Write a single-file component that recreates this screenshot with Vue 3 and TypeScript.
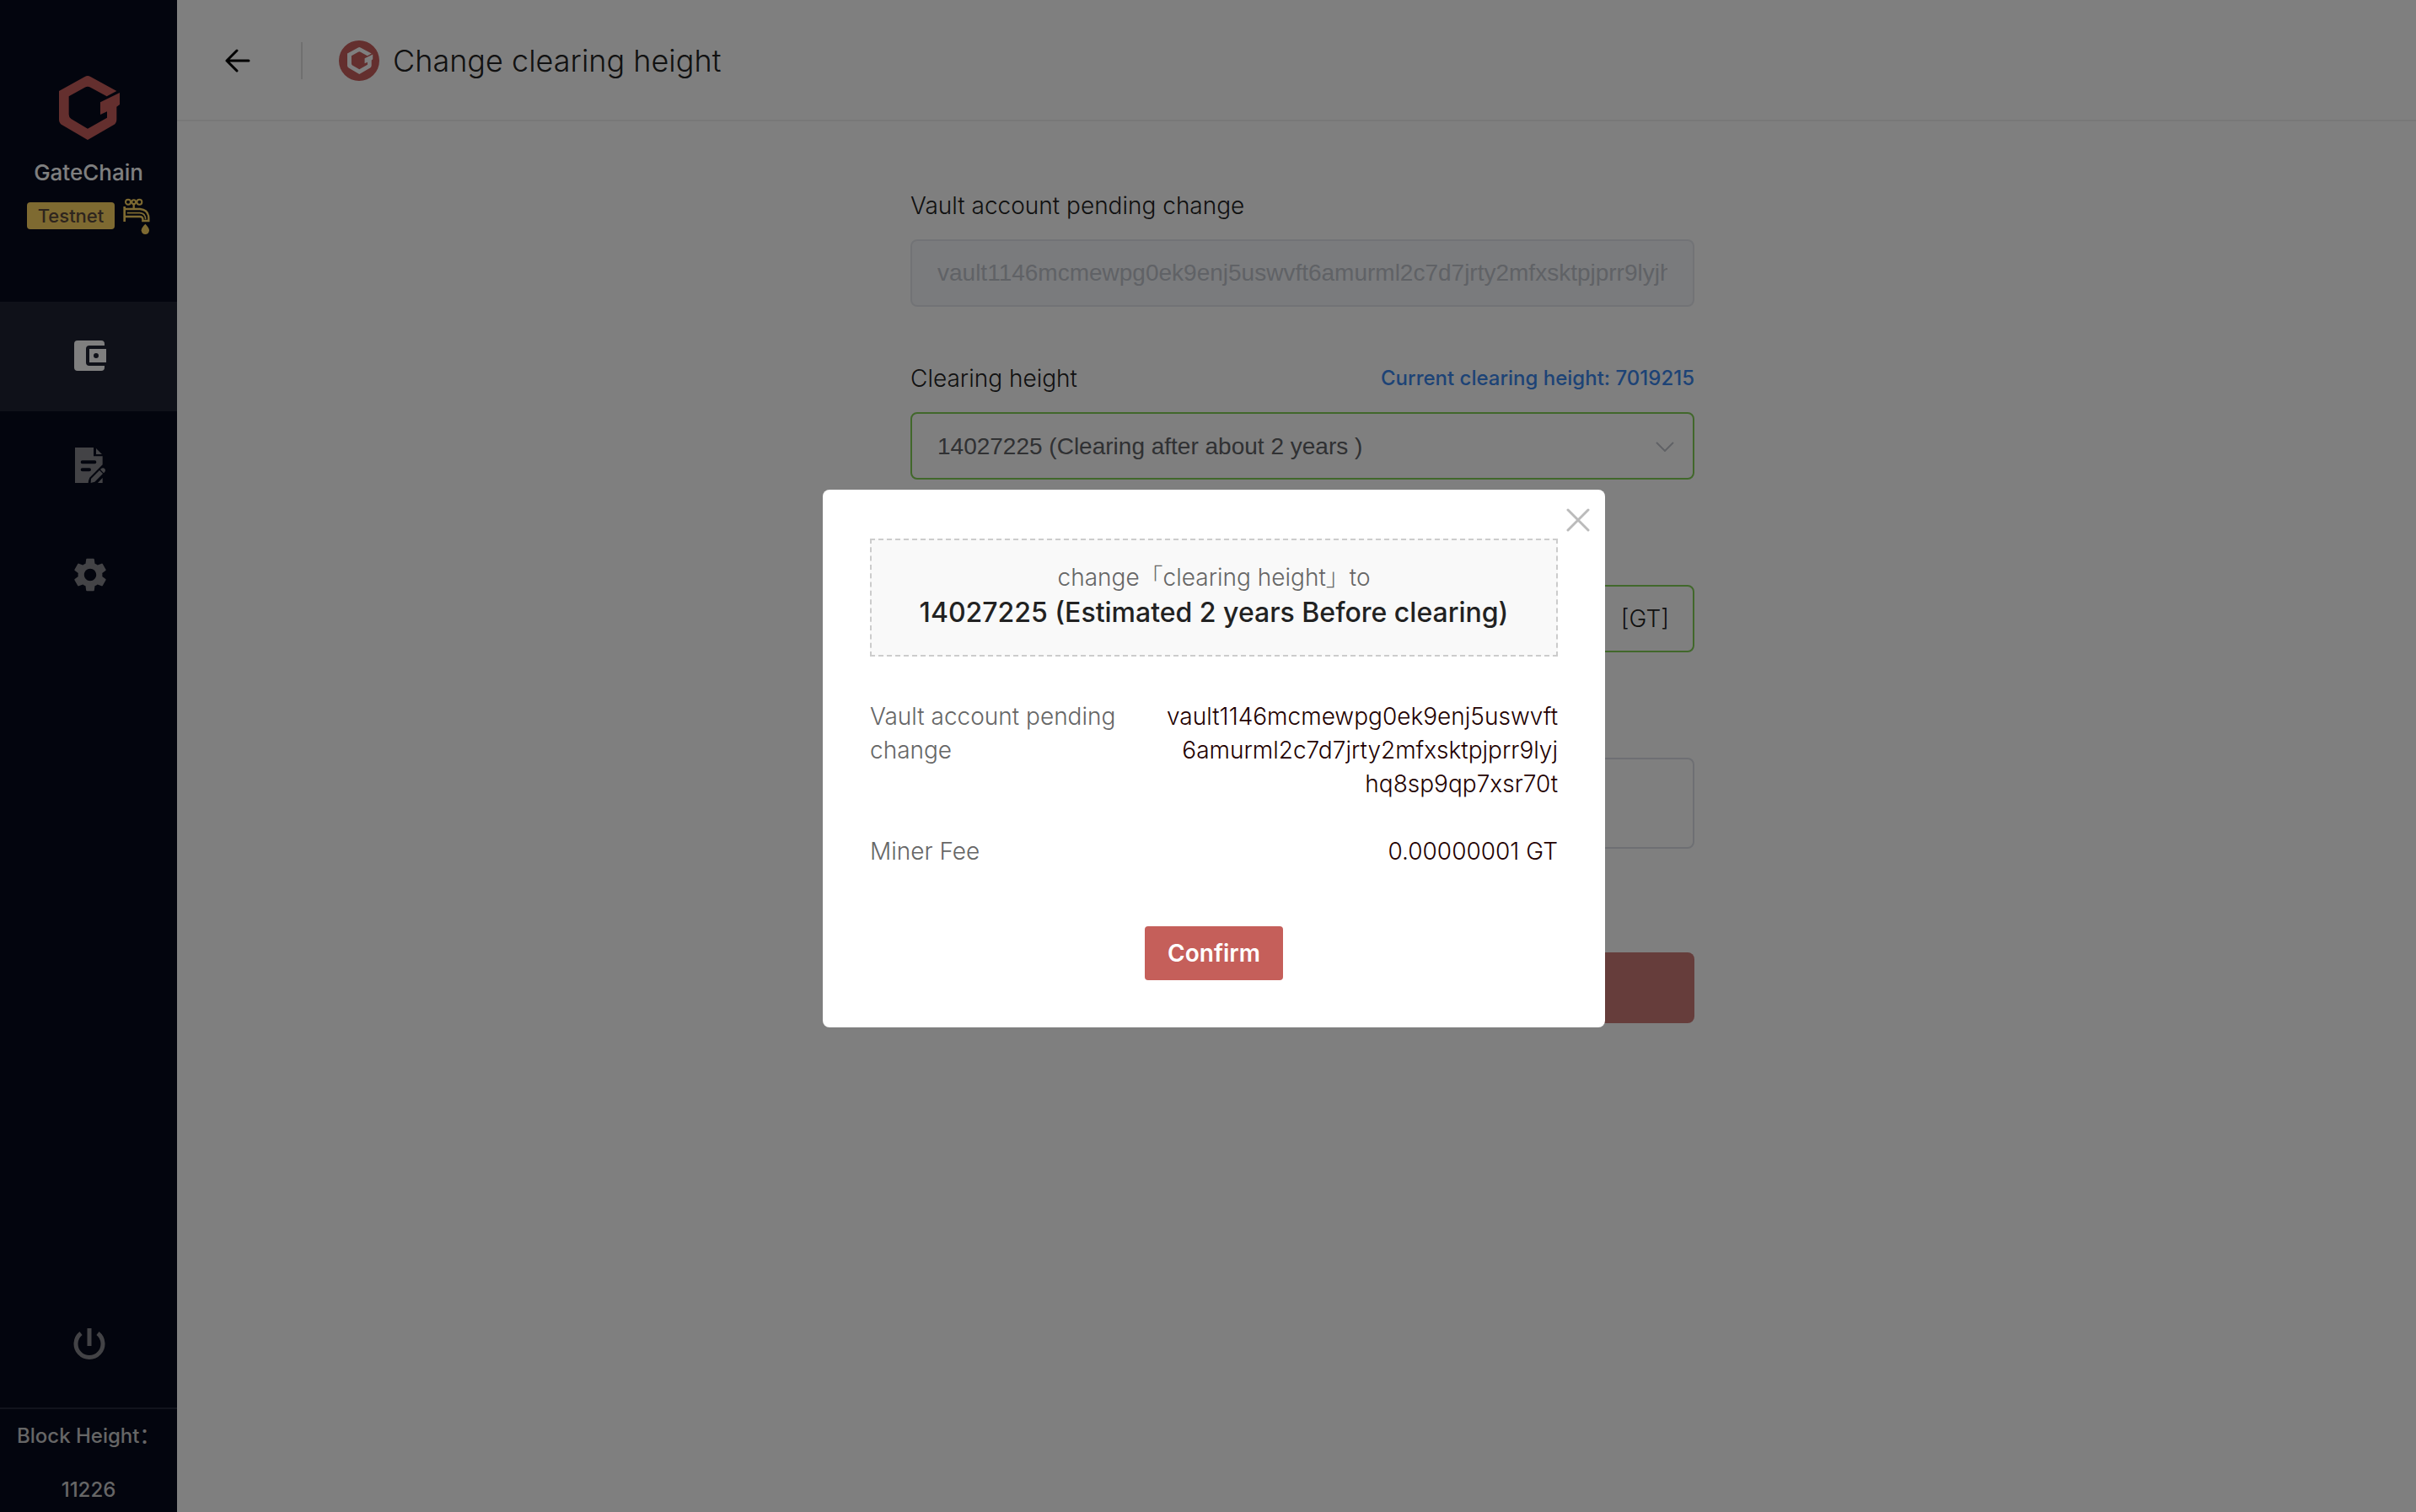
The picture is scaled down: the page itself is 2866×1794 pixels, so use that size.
<script setup lang="ts">
import { ref } from 'vue'

interface HeightOption {
  value: string
  label: string
}

const account = 'vault1146mcmewpg0ek9enj5uswvft6amurml2c7d7jrty2mfxsktpjprr9lyjhq8sp9qp7xsr70t'
const accountLines: string[] = [account.slice(0, 30), account.slice(30, 62), account.slice(62)]

const heights: HeightOption[] = [
  { value: '14027225', label: '14027225 (Clearing after about 2 years )' },
]
const selectedHeight = ref<string>('14027225')
const fee = ref<string>('')
const note = ref<string>('')
const dialogOpen = ref<boolean>(true)
</script>

<template>
  <div class="app">
    <aside class="sidebar">
      <svg class="brand-logo" viewBox="0 0 216 228" aria-hidden="true">
        <path d="M92 3Q102-3 112 3L205 54L170 73L112 41Q102 35 92 41L35 73V137Q35 147 43 153L102 188L171 149V127L147 138V94L216 60V102L205 110V155Q205 168 194 175L102 228L11 175Q0 168 0 155V54Z" />
      </svg>
      <div class="brand-name">GateChain</div>
      <div class="network">
        <span class="badge">Testnet</span>
        <svg class="faucet" viewBox="0 0 96 129" aria-hidden="true">
          <g fill="none" stroke="currentColor" stroke-width="6">
            <circle cx="18" cy="14" r="9" />
            <circle cx="38" cy="14" r="7" />
            <circle cx="58" cy="14" r="9" />
            <path d="M38 21V38" stroke-width="7" />
            <path d="M5 30V84" stroke-width="8" />
            <path d="M5 39H60Q90 42 91 70V81H70V74Q69 66 60 66H5" stroke-width="7" />
            <path d="M14 53H60Q80 55 80 76" stroke-width="5" />
          </g>
          <path d="M79 92Q93 106 93 115A14 14 0 0 1 65 115Q65 106 79 92Z" fill="currentColor" />
        </svg>
      </div>
      <nav class="nav">
        <a class="nav-item active" href="#wallet" aria-label="Wallet">
          <svg width="38" height="36" viewBox="0 0 114 108">
            <path d="M12 0H96Q108 0 108 12V18H54Q42 18 42 30V78Q42 90 54 90H108V96Q108 108 96 108H12Q0 108 0 96V12Q0 0 12 0Z" />
            <path fill-rule="evenodd" d="M54 30H114V78H54ZM78 45A9 9 0 1 0 78 63A9 9 0 1 0 78 45Z" />
          </svg>
        </a>
        <a class="nav-item" href="#records" aria-label="Records">
          <svg width="36" height="42" viewBox="0 0 108 126">
            <path fill-rule="evenodd" d="M0 0H66V31H98V61L52 107Q48 115 47 126H0ZM26 46A6 6 0 0 0 26 58H70A6 6 0 0 0 70 46ZM26 73A6 6 0 0 0 26 85H51A6 6 0 0 0 51 73Z" />
            <path d="M75 3L96 24H75ZM57 111L87 81L99 93L70 122L56 126ZM90 78L94 74Q101 70 107 77Q110 84 103 90L102 91ZM98 108V126H81Z" />
          </svg>
        </a>
        <a class="nav-item" href="#settings" aria-label="Settings">
          <svg width="48" height="48" viewBox="0 0 24 24">
            <path d="M19.14 12.94c.04-.3.06-.61.06-.94 0-.32-.02-.64-.07-.94l2.03-1.58a.49.49 0 0 0 .12-.61l-1.92-3.32a.488.488 0 0 0-.59-.22l-2.39.96c-.5-.38-1.03-.7-1.62-.94l-.36-2.54a.484.484 0 0 0-.48-.41h-3.84c-.24 0-.43.17-.47.41l-.36 2.54c-.59.24-1.13.57-1.62.94l-2.39-.96c-.22-.08-.47 0-.59.22L2.74 8.87c-.12.21-.08.47.12.61l2.03 1.58c-.05.3-.09.63-.09.94s.02.64.07.94l-2.03 1.58a.49.49 0 0 0-.12.61l1.92 3.32c.12.22.37.29.59.22l2.39-.96c.5.38 1.03.7 1.62.94l.36 2.54c.05.24.24.41.48.41h3.84c.24 0 .44-.17.47-.41l.36-2.54c.59-.24 1.13-.56 1.62-.94l2.39.96c.22.08.47 0 .59-.22l1.92-3.32c.12-.22.07-.47-.12-.61l-2.01-1.58zM12 15.6c-1.98 0-3.6-1.62-3.6-3.6s1.62-3.6 3.6-3.6 3.6 1.62 3.6 3.6-1.62 3.6-3.6 3.6z" />
          </svg>
        </a>
      </nav>
      <button class="power" type="button" aria-label="Log out">
        <svg width="38" height="38" viewBox="0 0 38 38" fill="none" stroke="currentColor" stroke-width="5">
          <path d="M9 6A16 16 0 1 0 29 6" />
          <path d="M19 0V21" />
        </svg>
      </button>
      <div class="block-height">
        <div>Block Height：</div>
        <div class="block-number">11226</div>
      </div>
    </aside>

    <main class="main">
      <header class="topbar">
        <button class="back" type="button" aria-label="Back">
          <svg width="30" height="28" viewBox="0 0 30 28" fill="none" stroke="currentColor" stroke-width="3" stroke-linecap="round" stroke-linejoin="round">
            <path d="M14 2L2 14L14 26M2 14H28" />
          </svg>
        </button>
        <span class="divider"></span>
        <svg class="token" viewBox="0 0 48 48" aria-hidden="true">
          <circle cx="24" cy="24" r="24" fill="#c85e5c" />
          <path transform="translate(10 8) scale(.14)" fill="#fff" d="M92 3Q102-3 112 3L205 54L170 73L112 41Q102 35 92 41L35 73V137Q35 147 43 153L102 188L171 149V127L147 138V94L216 60V102L205 110V155Q205 168 194 175L102 228L11 175Q0 168 0 155V54Z" />
        </svg>
        <h1 class="title">Change clearing height</h1>
      </header>

      <form class="form" @submit.prevent="dialogOpen = true">
        <div class="field">
          <div class="label-row"><label for="account">Vault account pending change</label></div>
          <input id="account" class="box" type="text" :value="account" disabled />
        </div>
        <div class="field">
          <div class="label-row">
            <label for="height">Clearing height</label>
            <span class="current">Current clearing height: 7019215</span>
          </div>
          <div class="select-wrap">
            <select id="height" v-model="selectedHeight" class="box valid">
              <option v-for="h in heights" :key="h.value" :value="h.value">{{ h.label }}</option>
            </select>
            <svg class="chevron" width="22" height="12" viewBox="0 0 22 12" fill="none" stroke="#c0c4cc" stroke-width="2">
              <path d="M1 1L11 11L21 1" />
            </svg>
          </div>
        </div>
        <div class="field">
          <div class="label-row"></div>
          <div class="box valid fee">
            <input v-model="fee" class="fee-input" type="text" aria-label="Miner Fee" />
            <span>[GT]</span>
          </div>
        </div>
        <div class="field">
          <div class="label-row"></div>
          <textarea v-model="note" class="box area" aria-label="Note"></textarea>
        </div>
        <button class="submit" type="submit" aria-label="Submit"></button>
      </form>
    </main>

    <div v-if="dialogOpen" class="overlay">
      <section class="dialog" role="dialog" aria-modal="true" aria-label="Confirm change">
        <button class="close" type="button" aria-label="Close" @click="dialogOpen = false">
          <svg width="28" height="28" viewBox="0 0 28 28" fill="none" stroke="currentColor" stroke-width="3" stroke-linecap="round">
            <path d="M2 2L26 26M26 2L2 26" />
          </svg>
        </button>
        <div class="summary">
          <div class="summary-top">change「clearing height」to</div>
          <div class="summary-main">14027225 (Estimated 2 years Before clearing)</div>
        </div>
        <dl class="details">
          <div class="detail">
            <dt>Vault account pending change</dt>
            <dd><span v-for="line in accountLines" :key="line" class="line">{{ line }}</span></dd>
          </div>
          <div class="detail">
            <dt>Miner Fee</dt>
            <dd>0.00000001 GT</dd>
          </div>
        </dl>
        <button class="confirm" type="button" @click="dialogOpen = false">Confirm</button>
      </section>
    </div>
  </div>
</template>

<style>
body {
  margin: 0;
  background: #fff;
}
</style>

<style scoped>
.app {
  display: flex;
  min-height: 100vh;
  font-family: Inter, "Noto Sans CJK SC", sans-serif;
  font-size: 28px;
  font-weight: 300;
  color: #222;
}
.app *,
.app *::before {
  box-sizing: border-box;
}
button {
  padding: 0;
  border: 0;
  background: none;
  font-family: inherit;
  cursor: pointer;
}
svg {
  display: block;
}
.sidebar {
  display: flex;
  flex-direction: column;
  align-items: center;
  flex: 0 0 210px;
  padding-top: 90px;
  background: #060b1c;
  color: #fff;
}
.brand-logo {
  width: 72px;
  height: 76px;
  margin-left: 2px;
  fill: #c85e5c;
}
.brand-name {
  margin-top: 19px;
  font-size: 26px;
  font-weight: 500;
  line-height: 40px;
}
.network {
  display: flex;
  align-items: center;
  gap: 10px;
  height: 44px;
  margin-top: 9px;
  color: #fdd562;
}
.badge {
  width: 104px;
  border-radius: 4px;
  background: #fdd562;
  color: #5c4a3c;
  font-size: 22px;
  font-weight: 500;
  line-height: 32px;
  text-align: center;
}
.faucet {
  width: 32px;
  height: 43px;
}
.nav {
  align-self: stretch;
  margin-top: 80px;
}
.nav-item {
  display: flex;
  align-items: center;
  justify-content: center;
  height: 130px;
  padding: 0 0 2px 3px;
  fill: #87878c;
}
.nav-item.active {
  background: #1e2232;
  fill: #fff;
}
.power {
  margin: auto 0 56px 2px;
  color: #87878c;
}
.block-height {
  align-self: stretch;
  height: 124px;
  border-top: 2px solid #24293a;
  padding-left: 20px;
  font-size: 24px;
  font-weight: 500;
  line-height: 64px;
  color: #ccc;
  white-space: nowrap;
  overflow: hidden;
}
.block-number {
  margin-left: -20px;
  text-align: center;
}
.main {
  flex: 1;
  min-width: 0;
}
.topbar {
  display: flex;
  align-items: center;
  height: 144px;
  padding: 2px 0 0 57px;
  border-bottom: 2px solid #f0f0f0;
}
.back {
  color: #000;
}
.divider {
  width: 2px;
  height: 44px;
  margin: 0 43px 0 60px;
  background: #e0e0e0;
}
.token {
  width: 48px;
  height: 48px;
}
.title {
  margin: 0 0 0 16px;
  font-size: 36px;
  font-weight: 300;
}
.form {
  display: flex;
  flex-direction: column;
  gap: 61px;
  max-width: 930px;
  margin: 76px auto 0;
  position: relative;
  left: 7px;
}
.field {
  display: flex;
  flex-direction: column;
  gap: 16px;
}
.label-row {
  display: flex;
  justify-content: space-between;
  height: 48px;
  line-height: 48px;
}
.current {
  font-size: 24px;
  font-weight: 500;
  color: #3a86ec;
}
.box {
  width: 100%;
  height: 80px;
  margin: 0;
  padding: 0 30px;
  border: 2px solid #dcdfe6;
  border-radius: 8px;
  outline: 0;
  background: #fff;
  font-family: "Liberation Sans", Arial, sans-serif;
  font-size: 28px;
  color: #606266;
}
.box:disabled {
  border-color: #e4e7ed;
  background: #f5f7fa;
  color: #c0c4cc;
}
.valid {
  border-color: #82d056;
}
.select-wrap {
  position: relative;
}
select.box {
  display: block;
  appearance: none;
}
.chevron {
  position: absolute;
  top: 35px;
  right: 24px;
  pointer-events: none;
}
.fee {
  display: flex;
  align-items: center;
  justify-content: space-between;
  padding-right: 28px;
  font-family: inherit;
  color: #222;
}
.fee-input {
  flex: 1;
  border: 0;
  outline: 0;
  background: none;
  font-size: 28px;
}
.area {
  height: 108px;
  resize: none;
}
.submit {
  height: 84px;
  margin-top: 62px;
  border-radius: 8px;
  background: #cc7a76;
}
.overlay {
  position: fixed;
  inset: 0;
  display: flex;
  align-items: center;
  justify-content: center;
  padding: 6px 0 0 14px;
  background: rgba(0, 0, 0, 0.5);
}
.dialog {
  position: relative;
  display: flex;
  flex-direction: column;
  align-items: center;
  width: 928px;
  padding: 58px 56px 56px;
  border-radius: 8px;
  background: #fff;
}
.close {
  position: absolute;
  top: 22px;
  right: 18px;
  color: #bbb;
}
.summary {
  align-self: stretch;
  padding: 24px 0 28px;
  border: 2px dashed #ccc;
  background: #f9f9f9;
  text-align: center;
}
.summary-top {
  line-height: 40px;
  color: #666;
}
.summary-main {
  font-size: 32px;
  font-weight: 500;
  line-height: 44px;
}
.details {
  display: flex;
  flex-direction: column;
  align-self: stretch;
  gap: 40px;
  margin: 51px 0 69px;
  line-height: 40px;
}
.detail {
  display: flex;
  justify-content: space-between;
}
.detail dt {
  width: 310px;
  color: #666;
}
.detail dd {
  margin: 0;
  color: #200;
  text-align: right;
}
.line {
  display: block;
}
.confirm {
  width: 164px;
  height: 64px;
  border-radius: 4px;
  background: #c55f5a;
  color: #fff;
  font-size: 28px;
  font-weight: 600;
}
</style>
